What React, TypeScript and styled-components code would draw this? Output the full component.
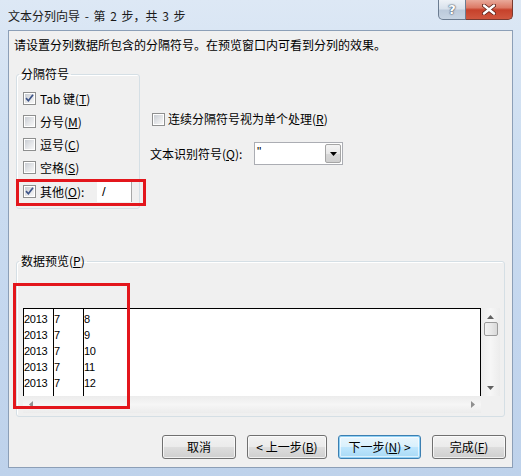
import React from "react";
import styled, { createGlobalStyle, css } from "styled-components";

const GlobalStyle = createGlobalStyle`
  html, body { margin: 0; padding: 0; background: #ffffff; }
  body {
    font-family: "Noto Sans CJK SC", "Noto Sans", sans-serif;
    font-size: 12px;
    color: #000;
  }
  #root { width: 521px; height: 476px; }
  u { text-decoration: underline; text-underline-offset: 1px; }
`;

const Window = styled.div`
  position: relative;
  width: 521px;
  height: 476px;
  box-sizing: border-box;
  display: flex;
  flex-direction: column;
  overflow: hidden;
  background: linear-gradient(180deg, #dde8f5 0%, #cddef1 30%, #c3d6ee 70%, #bed2eb 100%);
`;

const TitleBar = styled.div`
  height: 30px;
  flex: none;
  display: flex;
  align-items: flex-start;
`;

const Title = styled.div`
  margin: 8px 0 0 8px;
  line-height: 16px;
  font-size: 12px;
  color: #1a1a1a;
  white-space: pre;
  word-spacing: 2px;
`;

const Captions = styled.div`
  margin: 0 8px 0 auto;
  display: flex;
`;

const CaptionButton = styled.div<{ $close?: boolean }>`
  height: 20px;
  box-sizing: border-box;
  display: flex;
  align-items: center;
  justify-content: center;
  border: 1px solid #6b7c91;
  border-top: none;
  ${(p) =>
    p.$close
      ? css`
          width: 47px;
          border-left: none;
          border-radius: 0 0 5px 0;
          border-color: #7a3a30;
          background: linear-gradient(180deg, #e9a99a 0%, #dc7a66 40%, #c6412b 52%, #d0573f 100%);
        `
      : css`
          width: 28px;
          border-radius: 0 0 0 5px;
          background: linear-gradient(180deg, #eef2f7 0%, #d9e2ec 45%, #bccadb 55%, #c7d4e3 100%);
        `}
`;

const HelpGlyph = styled.span`
  font-family: "DejaVu Sans", sans-serif;
  font-weight: bold;
  font-size: 13px;
  line-height: 1;
  color: #ffffff;
  text-shadow: 0 0 1px #4a5b70, 0 0 1px #4a5b70, 0 0 2px #4a5b70;
`;

const Client = styled.div`
  flex: 1;
  margin: 0 8px 8px 8px;
  border: 1px solid #8c9fb7;
  background: #f0f0f0;
  display: flex;
  flex-direction: column;
  min-height: 0;
`;

const Instruction = styled.div`
  margin: 6px 0 0 5px;
  line-height: 16px;
  white-space: nowrap;
`;

const Middle = styled.div`
  display: flex;
  margin: 13px 0 0 7px;
`;

const Group = styled.fieldset<{ $w: number; $h: number }>`
  margin: 0;
  padding: 0;
  min-inline-size: 0;
  box-sizing: border-box;
  width: ${(p) => p.$w}px;
  height: ${(p) => p.$h}px;
  border: 1px solid #d5dfe5;
  border-radius: 3px;
  box-shadow: inset 1px 1px 0 #ffffff;
  display: flex;
  flex-direction: column;
`;

const Legend = styled.legend`
  margin-left: 2px;
  padding: 0 2px;
  line-height: 16px;
  color: #000;
`;

const OptionList = styled.div`
  display: flex;
  flex-direction: column;
  padding-top: 5px;
`;

const Row = styled.div<{ $pl?: number; $h?: number; $gap?: number; $mt?: number }>`
  display: flex;
  align-items: center;
  height: ${(p) => p.$h ?? 23}px;
  padding-left: ${(p) => p.$pl ?? 6}px;
  margin-top: ${(p) => p.$mt ?? 0}px;
  gap: ${(p) => p.$gap ?? 4}px;
  line-height: 16px;
  white-space: nowrap;
`;

const Box = styled.span`
  position: relative;
  flex: none;
  width: 13px;
  height: 13px;
  box-sizing: border-box;
  border: 1px solid #8e8f8f;
  background: #fff;
  padding: 1px;
  display: flex;
`;

const BoxInner = styled.span`
  flex: 1;
  background: linear-gradient(135deg, #c9cdd3 0%, #e2e4e7 50%, #f7f7f7 100%);
`;

const Check = styled.svg`
  position: absolute;
  left: 0;
  top: 0;
`;

const CheckBox: React.FC<{ checked?: boolean }> = ({ checked }) => (
  <Box>
    <BoxInner />
    {checked && (
      <Check width="11" height="11" viewBox="0 0 11 11">
        <path d="M2 5.2 L4.4 7.8 L9 1.8" fill="none" stroke="#3d5488" strokeWidth="1.7" />
      </Check>
    )}
  </Box>
);

const OtherLabel = styled.span`
  width: 53px;
`;

const OtherField = styled.div`
  width: 35px;
  height: 20px;
  box-sizing: border-box;
  background: #ffffff;
  border-right: 1px solid #a7a7a7;
  padding-left: 5px;
  font-family: "Liberation Sans", sans-serif;
  font-size: 13px;
  line-height: 20px;
`;

const RightColumn = styled.div`
  margin-left: 10px;
  display: flex;
  flex-direction: column;
`;

const ComboRow = styled.div`
  display: flex;
  align-items: center;
  margin-top: 13px;
  height: 23px;
  white-space: nowrap;
  line-height: 16px;
`;

const ComboLabel = styled.span`
  width: 104px;
`;

const Combo = styled.div`
  width: 89px;
  height: 23px;
  box-sizing: border-box;
  border: 1px solid #abadb3;
  background: #ffffff;
  display: flex;
`;

const ComboValue = styled.span`
  flex: 1;
  padding-left: 2px;
  font-family: "Liberation Sans", sans-serif;
  font-size: 12px;
  line-height: 18px;
`;

const ComboButton = styled.span`
  width: 16px;
  margin: 1px;
  box-sizing: border-box;
  border: 1px solid #a5a5a5;
  border-radius: 2px;
  background: linear-gradient(180deg, #f4f4f4 0%, #e8e8e8 50%, #d8d8d8 51%, #cfcfcf 100%);
  display: flex;
  align-items: center;
  justify-content: center;
`;

const PreviewGroup = styled(Group)`
  margin: 44px 0 0 7px;
`;

const PreviewFrame = styled.div`
  margin: 39px 0 0 6px;
  display: grid;
  grid-template-columns: 458px 19px;
  grid-template-rows: 88px 17px;
`;

const DataArea = styled.div`
  box-sizing: border-box;
  border: 1px solid #000;
  border-bottom: none;
  background: #ffffff;
  display: flex;
  overflow: hidden;
`;

const DataColumn = styled.div<{ $w?: number }>`
  ${(p) => (p.$w ? `width: ${p.$w}px;` : "flex: 1;")}
  border-right: ${(p) => (p.$w ? "1px solid #000" : "none")};
  padding-top: 2px;
  font-family: "Liberation Sans", sans-serif;
  font-size: 11px;
  letter-spacing: -0.3px;
  line-height: 16px;
  display: flex;
  flex-direction: column;
`;

const ScrollV = styled.div`
  background: linear-gradient(90deg, #ececec 0%, #f6f6f6 50%, #ececec 100%);
  display: flex;
  flex-direction: column;
  align-items: center;
`;

const ScrollH = styled.div`
  background: linear-gradient(180deg, #ececec 0%, #f6f6f6 50%, #ececec 100%);
  display: flex;
  align-items: center;
  justify-content: space-between;
  padding: 0 6px;
`;

const Corner = styled.div`
  background: #f0f0f0;
`;

const Thumb = styled.div`
  width: 14px;
  height: 14px;
  box-sizing: border-box;
  border: 1px solid #9a9a9a;
  border-radius: 2px;
  background: linear-gradient(90deg, #f3f3f3 0%, #e8e8e8 50%, #d9d9d9 100%);
  margin-top: 3px;
`;

const Spacer = styled.div<{ $h?: number }>`
  ${(p) => (p.$h !== undefined ? `height: ${p.$h}px;` : "flex: 1;")}
`;

const Arrow = styled.svg`
  flex: none;
`;

const ButtonRow = styled.div`
  display: flex;
  justify-content: flex-end;
  gap: 11px;
  margin: 18px 6px 0 0;
`;

const Button = styled.div<{ $w: number; $focused?: boolean }>`
  width: ${(p) => p.$w}px;
  height: 24px;
  box-sizing: border-box;
  border: 1px solid #707070;
  border-radius: 3px;
  background: linear-gradient(180deg, #f2f2f2 0%, #ebebeb 48%, #dddddd 52%, #cfcfcf 100%);
  box-shadow: inset 0 0 0 1px rgba(255, 255, 255, 0.7);
  display: flex;
  align-items: center;
  justify-content: center;
  line-height: 16px;
  white-space: pre;
  ${(p) =>
    p.$focused &&
    css`
      border-color: #3c7fb1;
      background: linear-gradient(180deg, #eaf6fd 0%, #d9f0fc 48%, #bee6fd 52%, #a7d9f5 100%);
      box-shadow: inset 0 0 0 1px #8fd0f5, inset 0 0 0 2px rgba(255, 255, 255, 0.6);
    `}
`;

const Annotation = styled.div<{ $x: number; $y: number; $w: number; $h: number }>`
  position: absolute;
  left: ${(p) => p.$x}px;
  top: ${(p) => p.$y}px;
  width: ${(p) => p.$w}px;
  height: ${(p) => p.$h}px;
  box-sizing: border-box;
  border: 3px solid #e3161c;
  pointer-events: none;
`;

const rows = [
  ["2013", "7", "8"],
  ["2013", "7", "9"],
  ["2013", "7", "10"],
  ["2013", "7", "11"],
  ["2013", "7", "12"],
];

const Tri: React.FC<{ dir: "up" | "down" | "left" | "right"; color?: string }> = ({ dir, color = "#606060" }) => {
  const pts = {
    up: "0,4 3.5,0 7,4",
    down: "0,0 7,0 3.5,4",
    left: "4,0 4,7 0,3.5",
    right: "0,0 0,7 4,3.5",
  }[dir];
  const vertical = dir === "up" || dir === "down";
  return (
    <Arrow width={vertical ? 7 : 4} height={vertical ? 4 : 7} viewBox={vertical ? "0 0 7 4" : "0 0 4 7"}>
      <polygon points={pts} fill={color} />
    </Arrow>
  );
};

export default function App() {
  return (
    <>
      <GlobalStyle />
      <Window>
        <TitleBar>
          <Title>文本分列向导 - 第 2 步，共 3 步</Title>
          <Captions>
            <CaptionButton>
              <HelpGlyph>?</HelpGlyph>
            </CaptionButton>
            <CaptionButton $close>
              <svg width="14" height="11" viewBox="0 0 14 11">
                <path d="M2 1.5 L12 9.5 M12 1.5 L2 9.5" stroke="#5a1d14" strokeWidth="4" strokeLinecap="round" />
                <path d="M2 1.5 L12 9.5 M12 1.5 L2 9.5" stroke="#ffffff" strokeWidth="2.4" strokeLinecap="round" />
              </svg>
            </CaptionButton>
          </Captions>
        </TitleBar>
        <Client>
          <Instruction>请设置分列数据所包含的分隔符号。在预览窗口内可看到分列的效果。</Instruction>
          <Middle>
            <Group $w={124} $h={143}>
              <Legend>分隔符号</Legend>
              <OptionList>
                <Row>
                  <CheckBox checked />
                  <span>
                    Tab 键(<u>T</u>)
                  </span>
                </Row>
                <Row>
                  <CheckBox />
                  <span>
                    分号(<u>M</u>)
                  </span>
                </Row>
                <Row>
                  <CheckBox />
                  <span>
                    逗号(<u>C</u>)
                  </span>
                </Row>
                <Row>
                  <CheckBox />
                  <span>
                    空格(<u>S</u>)
                  </span>
                </Row>
                <Row $h={25}>
                  <CheckBox checked />
                  <OtherLabel>
                    其他(<u>O</u>):
                  </OtherLabel>
                  <OtherField>/</OtherField>
                </Row>
              </OptionList>
            </Group>
            <RightColumn>
              <Row $pl={2} $h={20} $mt={43} $gap={3}>
                <CheckBox />
                <span>
                  连续分隔符号视为单个处理(<u>R</u>)
                </span>
              </Row>
              <ComboRow>
                <ComboLabel>
                  文本识别符号(<u>Q</u>):
                </ComboLabel>
                <Combo>
                  <ComboValue>"</ComboValue>
                  <ComboButton>
                    <Tri dir="down" color="#000" />
                  </ComboButton>
                </Combo>
              </ComboRow>
            </RightColumn>
          </Middle>
          <PreviewGroup $w={489} $h={164}>
            <Legend>
              数据预览(<u>P</u>)
            </Legend>
            <PreviewFrame>
              <DataArea>
                <DataColumn $w={29}>
                  {rows.map((r, i) => (
                    <span key={i}>{r[0]}</span>
                  ))}
                </DataColumn>
                <DataColumn $w={29}>
                  {rows.map((r, i) => (
                    <span key={i}>{r[1]}</span>
                  ))}
                </DataColumn>
                <DataColumn>
                  {rows.map((r, i) => (
                    <span key={i}>{r[2]}</span>
                  ))}
                </DataColumn>
              </DataArea>
              <ScrollV>
                <Spacer $h={7} />
                <Tri dir="up" />
                <Thumb />
                <Spacer />
                <Tri dir="down" />
                <Spacer $h={6} />
              </ScrollV>
              <ScrollH>
                <Tri dir="left" color="#909090" />
                <Tri dir="right" color="#909090" />
              </ScrollH>
              <Corner />
            </PreviewFrame>
          </PreviewGroup>
          <ButtonRow>
            <Button $w={74}>取消</Button>
            <Button $w={80}>
              {"< 上一步("}
              <u>B</u>)
            </Button>
            <Button $w={83} $focused>
              下一步(<u>N</u>
              {") >"}
            </Button>
            <Button $w={74}>
              完成(<u>F</u>)
            </Button>
          </ButtonRow>
        </Client>
        <Annotation $x={16} $y={179} $w={130} $h={27} />
        <Annotation $x={13} $y={283} $w={117} $h={126} />
      </Window>
    </>
  );
}
